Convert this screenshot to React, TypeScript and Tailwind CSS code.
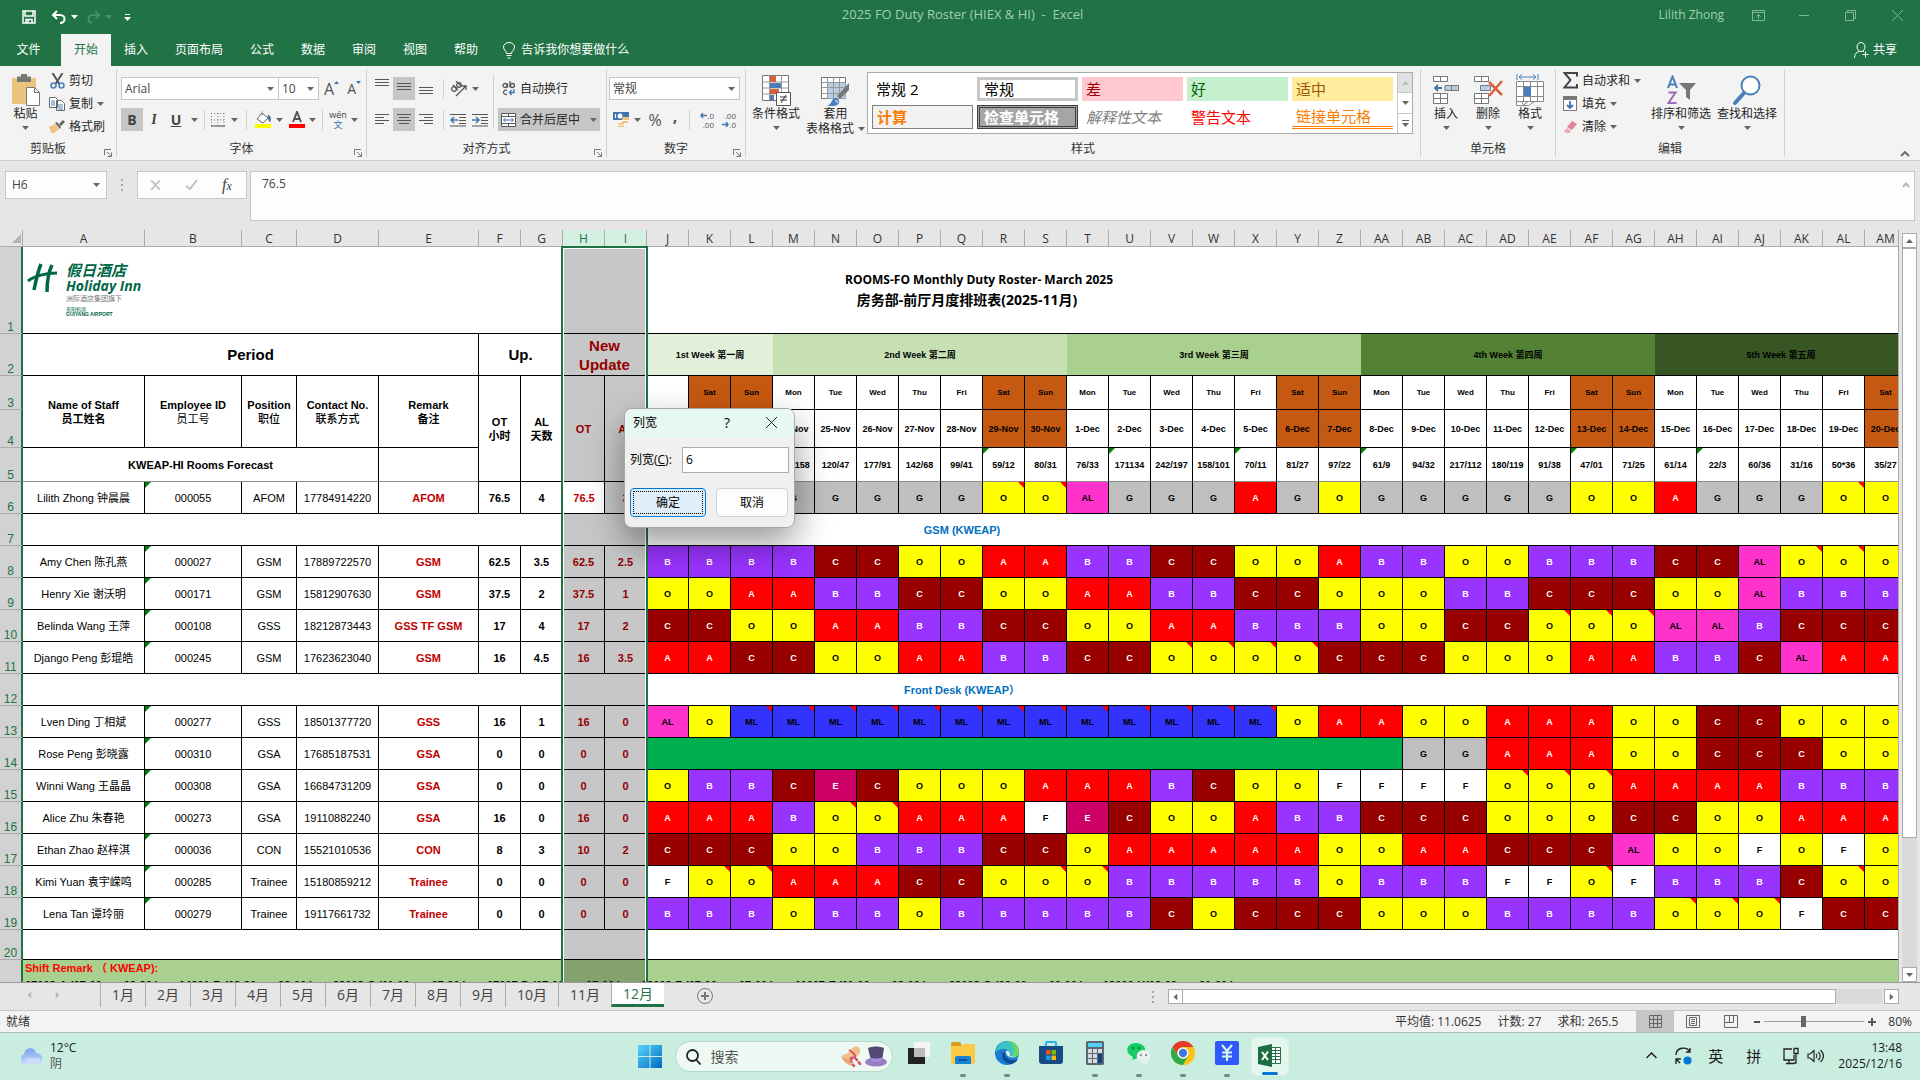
import React, { useState } from 'react';

const columns = [
  'A', 'B', 'C', 'D', 'E', 'F', 'G', 'H', 'I', 'J', 'K', 'L', 'M', 'N', 'O', 'P', 'Q', 'R', 'S', 'T', 'U', 'V', 'W', 'X', 'Y', 'Z',
  'AA', 'AB', 'AC', 'AD', 'AE', 'AF', 'AG', 'AH', 'AI', 'AJ', 'AK', 'AL', 'AM',
];

const days = ['Fri', 'Sat', 'Sun', 'Mon', 'Tue', 'Wed', 'Thu'];
const dates = [
  '21-Nov', '22-Nov', '23-Nov', '24-Nov', '25-Nov', '26-Nov', '27-Nov', '28-Nov', '29-Nov', '30-Nov',
  '1-Dec', '2-Dec', '3-Dec', '4-Dec', '5-Dec', '6-Dec', '7-Dec', '8-Dec', '9-Dec', '10-Dec',
  '11-Dec', '12-Dec', '13-Dec', '14-Dec', '15-Dec', '16-Dec', '17-Dec', '18-Dec', '19-Dec', '20-Dec',
];
const forecast = [
  '', '', '', '103/158', '120/47', '177/91', '142/68', '99/41', '59/12', '80/31',
  '76/33', '171134', '242/197', '158/101', '70/11', '81/27', '97/22', '61/9', '94/32', '217/112',
  '180/119', '91/38', '47/01', '71/25', '61/14', '22/3', '60/36', '31/16', '50*36', '35/27',
];
const forecastFlags = [8, 11, 14, 17, 22, 25];

interface Staff {
  row: number;
  name: string;
  id: string;
  position: string;
  phone: string;
  remark: string;
  ot: string;
  al: string;
  newOt: string;
  newAl: string;
  leave?: number;
  shifts: string;
}

// a trailing * marks a cell that carries a comment
const manager: Staff[] = [
  { row: 6, name: 'Lilith Zhong 钟晨晨', id: '000055', position: 'AFOM', phone: '17784914220', remark: 'AFOM', ot: '76.5', al: '4', newOt: '76.5', newAl: '3', shifts: 'G G G G G G G G O* O* AL G G G A G O G G G G G O O A G G G O* O' },
];
const gsm: Staff[] = [
  { row: 8, name: 'Amy Chen 陈孔燕', id: '000027', position: 'GSM', phone: '17889722570', remark: 'GSM', ot: '62.5', al: '3.5', newOt: '62.5', newAl: '2.5', shifts: 'B B B B C C O O A A B B C C O O A B B O O B B B C C AL O* O* O' },
  { row: 9, name: 'Henry Xie 谢沃明', id: '000171', position: 'GSM', phone: '15812907630', remark: 'GSM', ot: '37.5', al: '2', newOt: '37.5', newAl: '1', shifts: 'O O A A B B C C O O A A B B C C O O O B B C C C O O AL B B B' },
  { row: 10, name: 'Belinda Wang 王萍', id: '000108', position: 'GSS', phone: '18212873443', remark: 'GSS TF GSM', ot: '17', al: '4', newOt: '17', newAl: '2', shifts: 'C C O O A A B B C C O O A A B B B O O C C O* O* O* AL AL B C C C' },
  { row: 11, name: 'Django Peng 彭琨皓', id: '000245', position: 'GSM', phone: '17623623040', remark: 'GSM', ot: '16', al: '4.5', newOt: '16', newAl: '3.5', shifts: 'A A C C O O A A B B C C O* O* O* O* C C C O O O A A B B C AL A A' },
];
const frontDesk: Staff[] = [
  { row: 13, name: 'Lven Ding 丁相斌', id: '000277', position: 'GSS', phone: '18501377720', remark: 'GSS', ot: '16', al: '1', newOt: '16', newAl: '0', shifts: 'AL O ML* ML* ML* ML* ML* ML* ML* ML* ML* ML* ML* ML* ML* O A A O O A A A O O C C O O O' },
  { row: 14, name: 'Rose Peng 彭晓露', id: '000310', position: 'GSA', phone: '17685187531', remark: 'GSA', ot: '0', al: '0', newOt: '0', newAl: '0', leave: 18, shifts: 'G G A A A O O C C C O O' },
  { row: 15, name: 'Winni Wang 王晶晶', id: '000308', position: 'GSA', phone: '16684731209', remark: 'GSA', ot: '0', al: '0', newOt: '0', newAl: '0', shifts: 'O B B C E C O O O A A A B C O O F F F F O* O* O* A A A A B B B' },
  { row: 16, name: 'Alice Zhu 朱春艳', id: '000273', position: 'GSA', phone: '19110882240', remark: 'GSA', ot: '16', al: '0', newOt: '16', newAl: '0', shifts: 'A A A B O* O* A A A F E C O O A B B C C C O O O C C O O A A A' },
  { row: 17, name: 'Ethan Zhao 赵梓淇', id: '000036', position: 'CON', phone: '15521010536', remark: 'CON', ot: '8', al: '3', newOt: '10', newAl: '2', shifts: 'C C C O O B B B C C O A A A A A O O A A C C C AL O O F O F O' },
  { row: 18, name: 'Kimi Yuan 袁宇嵘鸣', id: '000285', position: 'Trainee', phone: '15180859212', remark: 'Trainee', ot: '0', al: '0', newOt: '0', newAl: '0', shifts: 'F O* O* A A A C C O O* O* B B B B B O B B B F F O* F B B B C O* O' },
  { row: 19, name: 'Lena Tan 谭玲丽', id: '000279', position: 'Trainee', phone: '19117661732', remark: 'Trainee', ot: '0', al: '0', newOt: '0', newAl: '0', shifts: 'B B B O B B O B B B B B C O C C C O O O B B B B O* O* O* F C C' },
];

const shiftTimes = [
  '07003-A (07:00——03:30 )',
  '14301-B (03:30——23:00 )',
  '23003-C (11:00——07:30 )',
  '07007-D (07:00——07:00 )',
  '18003-F (07:00——07:00 )',
  '11007-F (11:00——08:00 )',
  '23003-G (09:00——06:00 )',
  '12000-H(12:00——21:00 )',
];

const shiftColors: Record<string, string> = {
  A: 'bg-[#ff0000] text-white',
  B: 'bg-[#9933ff] text-white',
  C: 'bg-[#990000] text-white',
  E: 'bg-[#cc0066] text-white',
  F: 'bg-white text-black',
  G: 'bg-[#bfbfbf] text-black',
  O: 'bg-[#ffff00] text-black',
  AL: 'bg-[#ff33cc] text-black',
  ML: 'bg-[#3333ff] text-black',
};

const cell = 'border-r border-b border-black p-0 text-center';
const blank = 'border-b border-black bg-white p-0';

const Caret = ({ className = 'text-[#666]' }: { className?: string }) => (
  <svg width="7" height="4" viewBox="0 0 7 4" className={`shrink-0 ${className}`}><path d="M0 0h7L3.500 4z" fill="currentColor" /></svg>
);

const Flag = ({ comment = false }: { comment?: boolean }) =>
  comment ? (
    <svg width="6" height="6" className="absolute top-0 right-0"><path d="M0 0h6v6z" fill="#ff0000" /></svg>
  ) : (
    <svg width="6" height="6" className="absolute top-0 left-0"><path d="M0 0h6L0 6z" fill="#008000" /></svg>
  );

const RowNumber = ({ n }: { n?: number }) => (
  <th scope="row" className="border-r-2 border-b border-r-[#217346] border-b-[#ababab] bg-[#d2d2d2] p-0 text-center align-bottom text-xs leading-[11px] font-normal text-[#217346]">{n}</th>
);

/* ---------- ribbon ---------- */

const Group = ({ label, launcher = true, className, children }: { label: string; launcher?: boolean; className: string; children: React.ReactNode }) => (
  <section className={`relative flex flex-col border-r border-[#d0d0d0] ${className}`}>
    <div className="flex h-[72px] items-start">{children}</div>
    <div className="flex h-4 items-center justify-center text-xs text-[#333]">{label}</div>
    {launcher && (
      <button type="button" aria-label={`${label}设置`} className="absolute right-1 bottom-0">
        <svg width="8" height="8" viewBox="0 0 8 8" fill="none" stroke="#777"><path d="M.5 6V.5H7M3 3l4 4M7.500 3.500v4h-4" /></svg>
      </button>
    )}
  </section>
);

const Lines = ({ widths }: { widths: number[] }) => (
  <svg width="14" height="14" viewBox="0 0 14 14" stroke="#555" className="shrink-0">
    {widths.map((w, i) => {
      const start = w < 0 ? 14 + w : w === 10 ? 2 : 0;
      return <path key={i} d={`M${start} ${i * 3 + 1.5}h${Math.abs(w)}`} />;
    })}
  </svg>
);

const iconButton = 'flex h-[23px] items-center justify-center shrink-0';

const DropDown = ({ label, value, className }: { label: string; value: string; className: string }) => (
  <div className={`relative flex h-[23px] shrink-0 items-center border border-[#c6c6c6] bg-white ${className}`}>
    <select aria-label={label} className="size-full appearance-none bg-transparent pl-[3px] text-xs text-[#444] outline-none"><option>{value}</option></select>
    <Caret className="pointer-events-none absolute right-1 text-[#666]" />
  </div>
);

const BigButton = ({ icon, label, className }: { icon: React.ReactNode; label: string; className: string }) => (
  <button type="button" className={`flex h-full flex-col items-center pt-[5px] text-xs leading-4 whitespace-nowrap text-[#262626] ${className}`}>
    <span className="flex h-8 items-center">{icon}</span>
    <span>{label}</span>
    <Caret className="mt-1 text-[#666]" />
  </button>
);

const SmallButton = ({ icon, label, caret = false }: { icon: React.ReactNode; label: string; caret?: boolean }) => (
  <button type="button" className="flex h-[23px] items-center gap-1 text-xs whitespace-nowrap text-[#262626]">
    <span className="flex w-4 justify-center">{icon}</span>
    <span>{label}</span>
    {caret && <Caret />}
  </button>
);

const PasteIcon = () => (
  <svg width="28" height="32" viewBox="0 0 28 32">
    <path d="M0 4h24v26H0z" fill="#edc47d" />
    <path d="M5 2.500h4V0h6v2.500h4V8H5z" fill="#777" />
    <path d="M14.500 13.500h8l5 5v13h-13z" fill="#fff" stroke="#777" />
    <path d="M22.500 13.500v5h5" fill="none" stroke="#777" />
  </svg>
);
const CutIcon = () => (
  <svg width="15" height="16" viewBox="0 0 15 16" fill="none">
    <path d="M2.500 0l7 11M12.500 0l-7 11" stroke="#555" strokeWidth="2" />
    <circle cx="3.500" cy="12.500" r="2.500" stroke="#4a7ebb" strokeWidth="1.500" />
    <circle cx="11.500" cy="12.500" r="2.500" stroke="#4a7ebb" strokeWidth="1.500" />
  </svg>
);
const CopyIcon = () => (
  <svg width="16" height="14" viewBox="0 0 16 14" fill="#fff" stroke="#666">
    <path d="M.5.5h6l2 2v8h-8zM7.500 3.500h5l3 3v7h-8z" />
    <path d="M2 4h4M2 6h4M2 8h4M9 8h5M9 10h5M9 12h5" stroke="#4a7ebb" />
  </svg>
);
const BrushIcon = () => (
  <svg width="16" height="14" viewBox="0 0 16 14">
    <path d="M0 7l6-3 4 5-6 5-2-2z" fill="#edc47d" />
    <path d="M6 3l2-1 4 5-1 2zM10 4l4-4 2 2-4 4z" fill="#666" />
  </svg>
);
const ConditionalIcon = () => (
  <svg width="29" height="31" viewBox="0 0 29 31">
    <path d="M.5.5h26v25H.5z" fill="#fff" stroke="#777" />
    <path d="M.5 7h26M.5 13h26M.5 19h26M7.500 0v25M19.500 0v25" stroke="#999" />
    <path d="M8 1h6v6H8zM8 14h9v5H8z" fill="#d9603b" />
    <path d="M8 8h11v5H8zM8 20h4v5H8z" fill="#4a7ebb" />
    <path d="M14.500 17.500h14v13h-14z" fill="#fff" stroke="#555" />
    <path d="M18 22h7M18 25h7M24 20l-5 8" stroke="#333" />
  </svg>
);
const TableFormatIcon = () => (
  <svg width="29" height="31" viewBox="0 0 29 31">
    <path d="M.5 2.500h24v21H.5z" fill="#fff" stroke="#777" />
    <path d="M6.500 8h18v15.500h-18z" fill="#b8cce4" />
    <path d="M.5 7.500h24M.5 12.500h24M.5 18.500h24M6.500 2.500v21M12.500 2.500v21M18.500 2.500v21" stroke="#999" />
    <path d="M28 8v7l-9 9-3-3z" fill="#777" />
    <path d="M6 31c5-1 4-8 9-8 5 1 4 8-3 8z" fill="#4a7ebb" />
    <path d="M14 26c2-1 3 0 2 2" stroke="#fff" fill="none" />
  </svg>
);
const InsertIcon = () => (
  <svg width="26" height="30" viewBox="0 0 26 30" fill="#fff" stroke="#777">
    <path d="M.5 1.500h14v5H.5zM7.500 1.500v5M.5 18.500h14v10H.5zM7.500 18.500v10M.5 23.500h14" />
    <path d="M12 10.500h13.500v5H12zM18.500 10.500v5" fill="#b8cce4" />
    <path d="M9 13H2M5 10l-3 3 3 3" stroke="#3e74b0" strokeWidth="1.800" fill="none" />
  </svg>
);
const DeleteIcon = () => (
  <svg width="29" height="30" viewBox="0 0 29 30" fill="#fff" stroke="#777">
    <path d="M.5 1.500h14v5H.5zM7.500 1.500v5M.5 18.500h14v10H.5zM7.500 18.500v10M.5 23.500h14" />
    <path d="M6.500 10.500h10v5h-10z" fill="#b8cce4" />
    <path d="M15 7l13 13M28 6L15 21" stroke="#d9603b" strokeWidth="2.500" />
  </svg>
);
const FormatIcon = () => (
  <svg width="28" height="32" viewBox="0 0 28 32" fill="#fff" stroke="#888">
    <path d="M.5 7.500h27v20H.5zM7.500 7.500v20M14.500 7.500v20M21.500 7.500v20M.5 12.500h27M.5 22.500h27" />
    <path d="M8 13h7v9H8z" fill="#4a7ebb" stroke="none" />
    <path d="M1 0v6M22 0v6M3 3h17M6 .5L3 3l3 2.500M17 .5L20 3l-3 2.500" stroke="#4a7ebb" fill="none" />
    <path d="M.5 31.500v-4h5l2 3.500 5-3.500h6l-6 4z" />
  </svg>
);
const SortIcon = () => (
  <svg width="29" height="30" viewBox="0 0 29 30" fill="none">
    <path d="M1 13L5.500 1.500 10 13M2.500 9.500h6" stroke="#4a7ebb" strokeWidth="2" />
    <path d="M1.500 17.500h7L1.500 28h8" stroke="#9a6bb8" strokeWidth="2" />
    <path d="M12 8h17l-6 7v10l-4-3v-7z" fill="#777" />
  </svg>
);
const FindIcon = () => (
  <svg width="28" height="30" viewBox="0 0 28 30">
    <circle cx="17.500" cy="10.500" r="9" fill="#fff" stroke="#4a7ebb" strokeWidth="2" />
    <path d="M11 18L2 28" stroke="#4a7ebb" strokeWidth="4" strokeLinecap="round" />
  </svg>
);

const Separator = ({ className }: { className: string }) => <span className={`w-px shrink-0 bg-[#d0d0d0] ${className}`} />;

function TitleBar() {
  return (
    <header className="flex h-[34px] items-center bg-[#217346] pb-1 text-xs text-[#9fcfb4]">
      <div className="flex flex-1 items-center pt-1 pl-[22px]">
        <button type="button" aria-label="保存">
          <svg width="14" height="14" viewBox="0 0 14 14" fill="none" stroke="#fff" strokeWidth="1.500"><path d="M1 1h12v12H1zM3 1v5h8V1M4 13V9.500h6V13M6 10v3" /></svg>
        </button>
        <button type="button" aria-label="撤消" className="ml-[15px]">
          <svg width="16" height="14" viewBox="0 0 16 14" fill="none" stroke="#fff" strokeWidth="2"><path d="M6 1L2 5l4 4M2 5h7c6 0 6 8 0 8" /></svg>
        </button>
        <Caret className="ml-1 text-white" />
        <button type="button" aria-label="恢复" className="ml-2">
          <svg width="15" height="14" viewBox="0 0 16 14" fill="none" stroke="#4d9068" strokeWidth="2"><path d="M10 1l4 4-4 4M14 5H7c-6 0-6 8 0 8" /></svg>
        </button>
        <Caret className="ml-1 text-[#4d9068]" />
        <button type="button" aria-label="自定义快速访问工具栏" className="ml-3 flex flex-col items-center gap-0.5">
          <span className="h-px w-[5px] bg-white" />
          <Caret className="text-white" />
        </button>
      </div>
      <h1 className="text-[13px] whitespace-pre">2025 FO Duty Roster (HIEX & HI)  -  Excel</h1>
      <div className="flex flex-1 items-center justify-end pr-[17px]">
        <span className="pr-7">Lilith Zhong</span>
        <button type="button" aria-label="功能区显示选项" className="mr-[34px]">
          <svg width="13" height="11" viewBox="0 0 13 11" fill="none" stroke="#7eb796"><path d="M.5.5h12v10H.5zM.5 2.500h12M6.500 9V4.500M4.500 6.500l2-2 2 2" /></svg>
        </button>
        <button type="button" aria-label="最小化" className="mr-9">
          <svg width="10" height="10" stroke="#7eb796"><path d="M0 5.500h10" /></svg>
        </button>
        <button type="button" aria-label="向下还原" className="mr-9">
          <svg width="11" height="11" viewBox="0 0 11 11" fill="none" stroke="#7eb796"><path d="M.5 2.500h8v8h-8zM2.500 2.500v-2h8v8h-2" /></svg>
        </button>
        <button type="button" aria-label="关闭">
          <svg width="11" height="11" viewBox="0 0 11 11" stroke="#7eb796"><path d="M0 0l11 11M11 0L0 11" /></svg>
        </button>
      </div>
    </header>
  );
}

function TabBar() {
  const tabs = ['插入', '页面布局', '公式', '数据', '审阅', '视图', '帮助'];
  return (
    <nav className="flex h-8 items-stretch bg-[#217346] text-xs text-white">
      <button type="button" className="w-[61px] pr-1">文件</button>
      <button type="button" className="bg-[#f3f3f3] px-[13px] text-[#217346]">开始</button>
      <div className="flex gap-px">
        {tabs.map((t) => (
          <button key={t} type="button" className="px-[13px]">{t}</button>
        ))}
      </div>
      <button type="button" className="flex items-center gap-1.5 px-3">
        <svg width="12" height="17" viewBox="0 0 12 17" fill="none" stroke="#fff"><path d="M3.500 11.500C3.500 9 .5 8 .5 5a5.500 4.500 0 0111 0c0 3-3 4-3 6.500zM3.500 13.500h5M4.500 16h3" /></svg>
        告诉我你想要做什么
      </button>
      <button type="button" className="mr-[23px] ml-auto flex items-center gap-1">
        <svg width="15" height="17" viewBox="0 0 15 17" fill="none" stroke="#fff"><ellipse cx="7" cy="5" rx="4" ry="4.500" /><path d="M.5 16c0-4 2-6 5-6.500M9 9.500h1M11.500 9.500v6M8.500 12.500h6" /></svg>
        共享
      </button>
    </nav>
  );
}

function Ribbon() {
  const styles = [
    { label: '常规 2', cls: 'text-black' },
    { label: '常规', cls: 'border-3 border-[#c6c6c6] text-black' },
    { label: '差', cls: 'bg-[#ffc7ce] text-[#9c0006]' },
    { label: '好', cls: 'bg-[#c6efce] text-[#006100]' },
    { label: '适中', cls: 'bg-[#ffeb9c] text-[#9c5700]' },
    { label: '计算', cls: 'border border-[#7f7f7f] bg-[#f2f2f2] font-bold text-[#fa7d00]' },
    { label: '检查单元格', cls: 'border-3 border-double border-[#3f3f3f] bg-[#a5a5a5] font-bold text-white' },
    { label: '解释性文本', cls: 'text-[#7f7f7f] italic' },
    { label: '警告文本', cls: 'text-[#ff0000]' },
    { label: '链接单元格', cls: 'border-b-3 border-double border-[#ff8001] text-[#fa7d00]' },
  ];
  return (
    <div className="relative flex h-[95px] border-b border-[#d0d0d0] bg-[#f3f3f3] pt-[3px] pb-[3px]">
      <Group label="剪贴板" className="w-[117px] pr-9 [&>div:last-of-type]:pl-4">
        <BigButton icon={<PasteIcon />} label="粘贴" className="w-[45px] shrink-0 pl-1.5" />
        <div className="pl-1">
          <SmallButton icon={<CutIcon />} label="剪切" />
          <SmallButton icon={<CopyIcon />} label="复制" caret />
          <SmallButton icon={<BrushIcon />} label="格式刷" />
        </div>
      </Group>

      <Group label="字体" className="w-[250px]">
        <div className="flex flex-col gap-2 pt-2 pl-1">
          <div className="flex h-[23px]">
            <DropDown label="字体" value="Arial" className="w-[158px]" />
            <DropDown label="字号" value="10" className="w-10 border-l-0" />
            <button type="button" aria-label="增大字号" className="flex w-5 items-center justify-end text-base text-[#555]">A<svg width="5" height="3" className="mb-3"><path d="M0 3h5L2.500 0z" fill="#3e74b0" /></svg></button>
            <button type="button" aria-label="减小字号" className="flex w-[22px] items-center justify-end text-sm text-[#555]">A<svg width="5" height="3" className="mb-3"><path d="M0 0h5L2.500 3z" fill="#3e74b0" /></svg></button>
          </div>
          <div className="flex h-[23px] items-center text-sm text-[#444]">
            <button type="button" aria-label="加粗" className={`${iconButton} w-[22px] bg-[#c6c6c6] font-bold`}>B</button>
            <button type="button" aria-label="倾斜" className={`${iconButton} w-[22px] font-serif font-bold italic`}>I</button>
            <button type="button" aria-label="下划线" className={`${iconButton} w-[22px] font-bold underline`}>U</button>
            <Caret className="ml-1 text-[#666]" />
            <Separator className="mx-1.5 h-5" />
            <svg width="14" height="14" viewBox="0 0 14 14" className="shrink-0" stroke="#777" fill="none"><path d="M.5 0v13M7 0v13M13 0v13M0 .5h14M0 7h14" strokeDasharray="1 2" /><path d="M0 13h14" stroke="#444" /></svg>
            <Caret className="ml-1.5 text-[#666]" />
            <Separator className="mx-2 h-5" />
            <svg width="17" height="17" viewBox="0 0 17 17" className="shrink-0"><path d="M7 2l6 5-5 5-6-4z" fill="#fff" stroke="#666" /><path d="M7 5V0M13 4c3 1 3 4 2 7l-2-3z" fill="#3e74b0" stroke="#666" strokeWidth=".5" /><path d="M0 13h16v4H0z" fill="#ffff00" /></svg>
            <Caret className="ml-1 text-[#666]" />
            <svg width="16" height="17" viewBox="0 0 16 17" className="ml-1.5 shrink-0"><path d="M4 11L8 1l4 10M5.500 8h5" stroke="#555" strokeWidth="2" fill="none" /><path d="M0 13h16v4H0z" fill="#ff0000" /></svg>
            <Caret className="ml-1 text-[#666]" />
            <Separator className="mx-1.5 h-5" />
            <button type="button" aria-label="显示拼音" className="flex w-[18px] flex-col items-center text-[9px] leading-[10px]"><span>wén</span><span className="text-[#3e74b0]">文</span></button>
            <Caret className="ml-1 text-[#666]" />
          </div>
        </div>
      </Group>

      <Group label="对齐方式" className="w-[240px]">
        <div className="flex flex-col gap-2 pt-2 pl-1">
          <div className="flex h-[23px] items-center">
            <button type="button" aria-label="顶端对齐" className={`${iconButton} w-[22px] pb-2`}><Lines widths={[14, 14, 14]} /></button>
            <button type="button" aria-label="垂直居中" className={`${iconButton} w-[22px] bg-[#c6c6c6]`}><Lines widths={[14, 14, 14]} /></button>
            <button type="button" aria-label="底端对齐" className={`${iconButton} w-[22px] pt-2`}><Lines widths={[14, 14, 14]} /></button>
            <Separator className="mx-1.5 h-5" />
            <svg width="18" height="16" viewBox="0 0 18 16" className="shrink-0" fill="none" stroke="#555" strokeWidth="1.300"><circle cx="4" cy="8" r="2.300" /><path d="M3 4l5 5" /><circle cx="9" cy="4" r="2.300" /><path d="M6 0l5 5M6 15L16 5M12 5h4v4" /></svg>
            <Caret className="mx-1 text-[#666]" />
          </div>
          <div className="flex h-[23px] items-center">
            <button type="button" aria-label="左对齐" className={`${iconButton} w-[22px]`}><Lines widths={[14, 9, 14, 9]} /></button>
            <button type="button" aria-label="居中" className={`${iconButton} w-[22px] bg-[#c6c6c6]`}><Lines widths={[14, 10, 14, 10]} /></button>
            <button type="button" aria-label="右对齐" className={`${iconButton} w-[22px]`}><Lines widths={[14, -9, 14, -9]} /></button>
            <Separator className="mx-1.5 h-5" />
            <svg width="17" height="14" viewBox="0 0 17 14" className="shrink-0" stroke="#555" fill="none"><path d="M0 1.500h16M9 4.500h7M9 7.500h7M9 10.500h7M0 13h16" /><path d="M1 7h7M4 4L1 7l3 3" stroke="#3e74b0" strokeWidth="1.500" /></svg>
            <svg width="17" height="14" viewBox="0 0 17 14" className="ml-[5px] shrink-0" stroke="#555" fill="none"><path d="M0 1.500h16M9 4.500h7M9 7.500h7M9 10.500h7M0 13h16" /><path d="M0 7h7M4 4l3 3-3 3" stroke="#3e74b0" strokeWidth="1.500" /></svg>
          </div>
        </div>
        <Separator className="mx-1 mt-1.5 h-[54px]" />
        <div className="flex flex-col gap-2 pt-2">
          <button type="button" className="flex h-[23px] items-center gap-1 pl-1 text-xs text-[#262626]">
            <svg width="14" height="15" viewBox="0 0 14 15" fill="none" stroke="#555" strokeWidth="1.300"><circle cx="3" cy="4.500" r="2" /><path d="M5.500 2.500v4M8 0v6.500" /><circle cx="10.500" cy="4.500" r="2" /><path d="M5 9.500c-3-2-6 4 0 4" /><path d="M12 8v3.500H7.500M9.500 9l-2 2.500 2 2.500" stroke="#3e74b0" /></svg>
            自动换行
          </button>
          <button type="button" className="flex h-[23px] w-[102px] items-center gap-1 bg-[#c6c6c6] pl-[3px] text-xs whitespace-nowrap text-[#262626]">
            <svg width="15" height="14" viewBox="0 0 15 14" fill="#fff" stroke="#555" className="shrink-0"><path d="M.5.5h14v13H.5zM.5 3.500h14M.5 10.500h14M7.500 0v3.500M7.500 10.500V14" /><path d="M2.500 7h10M4.500 5l-2 2 2 2M10.500 5l2 2-2 2" stroke="#3e74b0" fill="none" /></svg>
            合并后居中
            <Caret className="ml-1.5 text-[#666]" />
          </button>
        </div>
      </Group>

      <Group label="数字" className="w-[139px]">
        <div className="flex flex-col gap-2 pt-2 pl-0.5">
          <DropDown label="数字格式" value="常规" className="w-[131px]" />
          <div className="flex h-[23px] items-center pl-1 text-base text-[#555]">
            <svg width="17" height="17" viewBox="0 0 17 17" className="shrink-0"><path d="M0 1h16v8H0z" fill="#3e74b0" /><circle cx="7" cy="5" r="2.500" fill="#fff" /><path d="M2 3h1v4H2z" fill="#fff" /><path d="M10 6h6v3h-1v3H9V7zM5 12h6v4H5z" fill="#edc47d" /><path d="M9 9.500h6M5 14h6" stroke="#fff" /></svg>
            <Caret className="ml-1 text-[#666]" />
            <button type="button" aria-label="百分比样式" className="ml-1.5 w-4">%</button>
            <button type="button" aria-label="千位分隔样式" className="ml-1.5 w-3 pb-2 font-bold">,</button>
            <Separator className="mx-2 h-5" />
            <button type="button" aria-label="增加小数位数" className="flex w-4 flex-col items-end text-[8px] leading-[9px] whitespace-nowrap">
              <span className="flex items-center"><svg width="7" height="5" fill="none" stroke="#3e74b0" strokeWidth="1.500"><path d="M7 2.500H1M3 0L1 2.500 3 5" /></svg>.0</span>
              <span>.00</span>
            </button>
            <button type="button" aria-label="减少小数位数" className="ml-1.5 flex w-4 flex-col items-end text-[8px] leading-[9px] whitespace-nowrap">
              <span>.00</span>
              <span className="flex items-center"><svg width="7" height="5" fill="none" stroke="#3e74b0" strokeWidth="1.500"><path d="M0 2.500h6M4 0l2 2.500L4 5" /></svg>.0</span>
            </button>
          </div>
        </div>
      </Group>

      <Group label="样式" launcher={false} className="min-w-0 flex-1">
        <BigButton icon={<ConditionalIcon />} label="条件格式" className="ml-0.5 w-[56px] shrink-0" />
        <button type="button" className="flex h-full w-[63px] shrink-0 flex-col items-center pt-[5px] text-xs leading-[15px] whitespace-nowrap text-[#262626]">
          <span className="flex h-8 items-center"><TableFormatIcon /></span>
          <span>套用</span>
          <span className="flex items-center gap-1">表格格式<Caret /></span>
        </button>
        <div className="mt-[3px] mr-[7px] flex h-[62px] min-w-0 flex-1 border border-[#ababab] bg-white">
          <div className="grid flex-1 grid-cols-5 gap-1 p-1 text-[15px] leading-5">
            {styles.map((s) => (
              <button key={s.label} type="button" className={`flex h-6 items-center overflow-hidden px-1 whitespace-nowrap ${s.cls}`}>{s.label}</button>
            ))}
          </div>
          <div className="flex w-[15px] flex-col border-l border-[#c6c6c6]">
            <button type="button" aria-label="上一行" className="flex flex-1 items-center justify-center bg-[#e1e1e1]"><Caret className="rotate-180 text-[#bbb]" /></button>
            <button type="button" aria-label="下一行" className="flex flex-1 items-center justify-center border-t border-[#c6c6c6]"><Caret /></button>
            <button type="button" aria-label="其他" className="flex flex-1 flex-col items-center justify-center gap-0.5 border-t border-[#c6c6c6]"><span className="h-px w-[7px] bg-[#666]" /><Caret /></button>
          </div>
        </div>
      </Group>

      <Group label="单元格" launcher={false} className="w-[135px]">
        <BigButton icon={<InsertIcon />} label="插入" className="ml-1 w-[42px]" />
        <BigButton icon={<DeleteIcon />} label="删除" className="w-[42px]" />
        <BigButton icon={<FormatIcon />} label="格式" className="w-[42px]" />
      </Group>

      <Group label="编辑" launcher={false} className="w-[229px]">
        <div className="w-[92px] pl-1.5">
          <SmallButton icon={<svg width="15" height="17" viewBox="0 0 15 17"><path d="M14 4.500V1H1.500l6 7-6 7.500H14V12" fill="none" stroke="#444" strokeWidth="2" /></svg>} label="自动求和" caret />
          <SmallButton icon={<svg width="14" height="15" viewBox="0 0 14 15" fill="#fff" stroke="#777"><path d="M.5.5h13v14H.5z" /><path d="M0 0h14v4H0z" fill="#777" stroke="none" /><path d="M7 5v7M4 9l3 3 3-3" stroke="#3e74b0" strokeWidth="1.800" fill="none" /></svg>} label="填充" caret />
          <SmallButton icon={<svg width="13" height="12" viewBox="0 0 13 12"><path d="M8 0l5 3-5 6-5-3z" fill="#e8829a" /><path d="M3 7l4 3-1 2H2L0 10z" fill="#eda9b8" /></svg>} label="清除" caret />
        </div>
        <BigButton icon={<SortIcon />} label="排序和筛选" className="w-[66px]" />
        <BigButton icon={<FindIcon />} label="查找和选择" className="w-[66px]" />
      </Group>

      <div className="flex w-[135px] items-end justify-end pr-2.5">
        <button type="button" aria-label="折叠功能区"><svg width="10" height="7" viewBox="0 0 10 7" fill="none" stroke="#666" strokeWidth="1.800"><path d="M1 6l4-4 4 4" /></svg></button>
      </div>
    </div>
  );
}

function FormulaBar() {
  return (
    <div className="flex h-[69px] items-start pt-2.5 pr-[5px] pl-[5px] text-xs text-[#444]">
      <div className="flex h-7 w-[102px] items-center border border-[#c6c6c6] bg-[#fdfdfd] pr-1.5 pl-1.5">
        <input aria-label="名称框" defaultValue="H6" className="w-full min-w-0 bg-transparent outline-none" />
        <Caret />
      </div>
      <div className="flex h-7 w-[30px] flex-col items-center justify-center gap-[3px]">
        {[0, 1, 2].map((i) => <span key={i} className="size-0.5 bg-[#a6a6a6]" />)}
      </div>
      <div className="flex h-7 w-[110px] items-center gap-6 border border-[#c6c6c6] bg-[#fdfdfd] pl-3">
        <button type="button" aria-label="取消输入"><svg width="11" height="10" viewBox="0 0 11 10" stroke="#c0c0c0" strokeWidth="1.800"><path d="M1 0l9 10M10 0L1 10" /></svg></button>
        <button type="button" aria-label="输入"><svg width="13" height="10" viewBox="0 0 13 10" fill="none" stroke="#c0c0c0" strokeWidth="2"><path d="M1 6l4 3 7-9" /></svg></button>
        <button type="button" aria-label="插入函数" className="font-['Liberation_Serif',serif] text-base leading-4 italic">f<span className="text-xs">x</span></button>
      </div>
      <div className="ml-[3px] flex h-[50px] flex-1 items-start border border-[#c6c6c6] bg-[#fdfdfd] pt-1 pr-1 pl-[11px]">
        <input aria-label="编辑栏" defaultValue="76.5" className="flex-1 bg-transparent outline-none" />
        <svg width="8" height="6" viewBox="0 0 8 6" className="mt-1.5" fill="none" stroke="#b0b0b0" strokeWidth="1.800"><path d="M1 5l3-3.500L7 5" /></svg>
      </div>
    </div>
  );
}

/* ---------- sheet ---------- */

function StaffRow({ staff }: { staff: Staff }) {
  const info = `${cell} bg-white`;
  return (
    <tr className="h-8">
      <RowNumber n={staff.row} />
      <td className={`${info} whitespace-nowrap`}>{staff.name}</td>
      <td className={`${info} relative`}><Flag />{staff.id}</td>
      <td className={info}>{staff.position}</td>
      <td className={info}>{staff.phone}</td>
      <td className={`${info} font-bold text-[#c00000]`}>{staff.remark}</td>
      <td className={`${info} font-bold`}>{staff.ot}</td>
      <td className={`${info} font-bold`}>{staff.al}</td>
      <td className={`${info} font-bold text-[#c00000] ${staff.row === 6 ? 'relative' : ''}`}>
        {staff.row === 6 ? <div className="absolute inset-0 left-px z-10 flex items-center justify-center bg-white">{staff.newOt}</div> : staff.newOt}
      </td>
      <td className={`${info} font-bold text-[#c00000]`}>{staff.newAl}</td>
      {staff.leave && <td colSpan={staff.leave} className={`${cell} bg-[#00b050]`} />}
      {staff.shifts.split(' ').map((s, i) => {
        const code = s.replace('*', '');
        return (
          <td key={i} className={`${cell} relative text-[9px] font-bold ${shiftColors[code]}`}>
            {s.endsWith('*') && <Flag comment />}
            {code}
          </td>
        );
      })}
    </tr>
  );
}

const SectionRow = ({ n, title }: { n: number; title: string }) => (
  <tr className="h-8">
    <RowNumber n={n} />
    <td colSpan={9} className={blank} />
    <td colSpan={15} className={`${blank} text-center font-bold text-[#0070c0]`}>{title}</td>
    <td colSpan={15} className={blank} />
  </tr>
);

function Sheet() {
  const weekend = (i: number) => i % 7 === 1 || i % 7 === 2;
  const head = `${cell} bg-white font-bold leading-[14px]`;
  return (
    <div className="relative min-w-0 flex-1 overflow-hidden border-r border-[#ababab]">
      <table className="w-[1907px] table-fixed border-separate border-spacing-0 font-['Liberation_Sans','Noto_Sans_CJK_SC',sans-serif] text-[11px] leading-[14px] text-black">
        <colgroup>
          <col className="w-[23px]" />
          <col className="w-[122px]" />
          <col className="w-[97px]" />
          <col className="w-[55px]" />
          <col className="w-[82px]" />
          <col className="w-[100px]" />
          {columns.slice(5).map((c) => <col key={c} className="w-[42px]" />)}
        </colgroup>
        <thead>
          <tr className="h-[17px] font-['Open_Sans',sans-serif] text-xs leading-[14px] text-[#333]">
            <th className="border-r border-b border-[#ababab] p-0"><svg width="9" height="9" className="ml-3"><path d="M9 0v9H0z" fill="#b4b4b4" /></svg></th>
            {columns.map((c) => (
              <th key={c} scope="col" className={`border-r border-b border-[#ababab] p-0 pt-0.5 font-normal ${c === 'H' || c === 'I' ? 'bg-[#d3f0e0] text-[#217346]' : 'bg-[#e6e6e6]'}`}>{c}</th>
            ))}
          </tr>
        </thead>
        <tbody>
          <tr className="h-[87px]">
            <RowNumber n={1} />
            <td colSpan={9} className={`${blank} align-top`}>
              <div className="flex gap-2 pt-4 pl-1 text-[#006747]">
                <svg width="31" height="30" viewBox="0 0 31 30" fill="none" stroke="#006747" strokeWidth="3.500"><path d="M14 1C11 8 9 17 7 27M25 2c-4 8-5 16-5 27" /><path d="M1 18c6-5 18-8 29-8" strokeWidth="3" /></svg>
                <div>
                  <div className="text-[15px] leading-4 font-bold italic">假日酒店</div>
                  <div className="font-['Open_Sans',sans-serif] text-sm leading-[14px] font-bold italic">Holiday Inn</div>
                  <div className="mt-0.5 text-[7px] leading-2 text-[#777]">洲际酒店集团旗下</div>
                  <div className="mt-1 text-[5px] leading-[5px]">贵阳机场</div>
                  <div className="text-[5px] leading-[5px] font-bold">GUIYANG AIRPORT</div>
                </div>
              </div>
            </td>
            <td colSpan={16} className={`${blank} pr-2 text-center font-['Open_Sans','Noto_Sans_CJK_SC',sans-serif] text-xs leading-5 font-bold`}>
              ROOMS-FO Monthly Duty Roster- March 2025
              <br />
              <span className="pr-6 text-sm leading-5">房务部-前厅月度排班表(2025-11月)</span>
            </td>
            <td colSpan={14} className={blank} />
          </tr>
          <tr className="h-[42px] text-[9px]">
            <RowNumber n={2} />
            <td colSpan={5} className={`${head} text-[15px]`}>Period</td>
            <td colSpan={2} className={`${head} text-[15px]`}>Up.</td>
            <td colSpan={2} className={`${cell} bg-white text-[15px] leading-[19px] font-bold text-[#c00000]`}>New<br />Update</td>
            <td colSpan={3} className="border-b border-black bg-[#e2efda] p-0 text-center font-bold">1st Week 第一周</td>
            <td colSpan={7} className="border-b border-black bg-[#c6e0b4] p-0 text-center font-bold">2nd Week 第二周</td>
            <td colSpan={7} className="border-b border-black bg-[#a9d08e] p-0 text-center font-bold">3rd Week 第三周</td>
            <td colSpan={7} className="border-b border-black bg-[#548235] p-0 text-center font-bold">4th Week 第四周</td>
            <td colSpan={6} className="border-b border-black bg-[#375623] p-0 text-center font-bold">5th Week 第五周</td>
          </tr>
          <tr className="h-[34px]">
            <RowNumber n={3} />
            <td rowSpan={2} className={head}>Name of Staff<br />员工姓名</td>
            <td rowSpan={2} className={head}>Employee ID<br /><span className="font-normal">员工号</span></td>
            <td rowSpan={2} className={head}>Position<br /><span className="font-medium">职位</span></td>
            <td rowSpan={2} className={head}>Contact No.<br /><span className="font-medium">联系方式</span></td>
            <td rowSpan={2} className={head}>Remark<br />备注</td>
            <td rowSpan={3} className={head}>OT<br />小时</td>
            <td rowSpan={3} className={head}>AL<br />天数</td>
            <td rowSpan={3} className={`${head} text-[#c00000]`}>OT</td>
            <td rowSpan={3} className={`${head} text-[#c00000]`}>AL</td>
            {dates.map((d, i) => (
              <td key={d} className={`${cell} text-[8px] font-bold ${weekend(i) ? 'bg-[#c65911]' : 'bg-white'}`}>{i > 0 && days[i % 7]}</td>
            ))}
          </tr>
          <tr className="h-[38px] text-[9px] font-bold">
            <RowNumber n={4} />
            {dates.map((d, i) => (
              <td key={d} className={`${cell} whitespace-nowrap ${weekend(i) ? 'bg-[#c65911]' : 'bg-white'}`}>{d}</td>
            ))}
          </tr>
          <tr className="h-[34px] font-bold [&>*]:border-b-[#8c8c8c]">
            <RowNumber n={5} />
            <td colSpan={4} className={head}>KWEAP-HI Rooms Forecast</td>
            <td className={head} />
            {forecast.map((f, i) => (
              <td key={i} className={`${cell} relative bg-white text-[9px]`}>{forecastFlags.includes(i) && <Flag />}{f}</td>
            ))}
          </tr>
          {manager.map((s) => <StaffRow key={s.id} staff={s} />)}
          <SectionRow n={7} title="GSM (KWEAP)" />
          {gsm.map((s) => <StaffRow key={s.id} staff={s} />)}
          <SectionRow n={12} title="Front Desk (KWEAP）" />
          {frontDesk.map((s) => <StaffRow key={s.id} staff={s} />)}
          <tr className="h-[30px]">
            <RowNumber n={20} />
            <td colSpan={39} className={blank} />
          </tr>
          <tr className="h-20">
            <RowNumber />
            <td colSpan={39} className="bg-[#a9d08e] p-0 pl-0.5 align-top font-bold whitespace-pre">
              <div className="leading-4 text-[#ff0000]">Shift Remark （ KWEAP):</div>
              <div className="mt-0.5 flex">
                {shiftTimes.map((t) => <span key={t} className="w-[154px]">{t}</span>)}
              </div>
            </td>
          </tr>
        </tbody>
      </table>
      <div className="pointer-events-none absolute top-4 -bottom-1 left-[561px] w-[87px] border-2 border-[#217346]">
        <div className="size-full border border-white bg-black/22 bg-clip-padding" />
      </div>
    </div>
  );
}

const scrollButton = 'flex shrink-0 items-center justify-center border border-[#ababab] bg-white';

function SheetTabs() {
  const [active, setActive] = useState('12月');
  const months = Array.from({ length: 12 }, (_, i) => `${i + 1}月`);
  return (
    <div className="flex h-7 shrink-0 items-start border-t border-[#9a9a9a] bg-[#e6e6e6] text-sm text-[#444]">
      <div className="flex h-6 w-[100px] items-center gap-[21px] pl-[26px]">
        <Caret className="rotate-90 text-[#b8b8b8]" />
        <Caret className="-rotate-90 text-[#b8b8b8]" />
      </div>
      {months.map((m, i) => (
        <button
          key={m}
          type="button"
          onClick={() => setActive(m)}
          className={`h-6 border-l border-[#ababab] ${i > 8 ? 'w-[53px]' : 'w-[45px]'} ${active === m ? 'border-b-3 border-b-[#217346] bg-white text-[#217346]' : ''}`}
        >
          {m}
        </button>
      ))}
      <button type="button" aria-label="新工作表" className="mt-[5px] ml-[33px]">
        <svg width="16" height="16" viewBox="0 0 16 16" fill="none" stroke="#777"><circle cx="8" cy="8" r="7.500" /><path d="M8 4v8M4 8h8" strokeWidth="2" /></svg>
      </button>
      <div className="mt-1.5 mr-[21px] ml-auto flex h-[15px] w-[747px]">
        <div className="flex w-4 shrink-0 flex-col gap-[3px] pt-0.5">
          {[0, 1, 2].map((i) => <span key={i} className="size-0.5 bg-[#a6a6a6]" />)}
        </div>
        <button type="button" aria-label="向左滚动" className={`${scrollButton} w-[15px]`}><Caret className="rotate-90 text-[#666]" /></button>
        <div className="flex flex-1 bg-[#dadada]"><div className="w-[93.4%] border border-l-0 border-[#ababab] bg-white" /></div>
        <button type="button" aria-label="向右滚动" className={`${scrollButton} ml-0.5 w-[15px]`}><Caret className="-rotate-90 text-[#666]" /></button>
      </div>
    </div>
  );
}

function StatusBar() {
  return (
    <div className="flex h-[23px] shrink-0 items-center border-t border-b border-t-[#c6c6c6] border-b-[#a9bdb3] bg-[#f3f3f3] pr-2 pl-1.5 text-xs text-[#333]">
      <span>就绪</span>
      <span className="mr-4 ml-auto">平均值: 11.0625</span>
      <span className="mr-4">计数: 27</span>
      <span className="mr-[18px]">求和: 265.5</span>
      <button type="button" aria-label="普通" className="flex h-full w-[38px] items-center justify-center bg-[#c6c6c6]">
        <svg width="13" height="13" viewBox="0 0 13 13" fill="none" stroke="#666"><path d="M.5.500h12v12H.5zM4.500 0v13M8.500 0v13M0 4.500h13M0 8.500h13" /></svg>
      </button>
      <button type="button" aria-label="页面布局视图" className="flex h-full w-[38px] items-center justify-center">
        <svg width="14" height="13" viewBox="0 0 14 13" fill="none" stroke="#666"><path d="M.5.500h13v12H.5zM3.500 2.500h7v8h-7zM5 4.500h4M5 6.500h4M5 8.500h4" /></svg>
      </button>
      <button type="button" aria-label="分页预览" className="flex h-full w-[38px] items-center justify-center">
        <svg width="14" height="13" viewBox="0 0 14 13" fill="none" stroke="#666"><path d="M.5.500h13v12H.5zM5.500 0v7.500M9.500 0v7.500M0 7.500h9.500" /></svg>
      </button>
      <button type="button" aria-label="缩小" className="ml-1 w-2.5"><span className="block h-0.5 w-1.5 bg-[#555]" /></button>
      <input
        type="range"
        aria-label="缩放"
        min={0}
        max={100}
        defaultValue={39}
        className="h-4 w-[100px] appearance-none bg-transparent bg-[linear-gradient(#a0a0a0,#a0a0a0)] bg-[length:100%_1px] bg-center bg-no-repeat [&::-webkit-slider-thumb]:h-[11px] [&::-webkit-slider-thumb]:w-[5px] [&::-webkit-slider-thumb]:appearance-none [&::-webkit-slider-thumb]:bg-[#666]"
      />
      <button type="button" aria-label="放大" className="ml-1 w-5"><svg width="8" height="8" stroke="#555" strokeWidth="2"><path d="M0 4h8M4 0v8" /></svg></button>
      <span>80%</span>
    </div>
  );
}

/* ---------- taskbar ---------- */

const TaskButton = ({ label, running = false, children }: { label: string; running?: boolean; children: React.ReactNode }) => (
  <button type="button" aria-label={label} className="flex h-10 w-11 flex-col items-center justify-between pt-1">
    {children}
    <span className={`h-[3px] w-1.5 rounded-full ${running ? 'bg-[#6f8a7f]' : ''}`} />
  </button>
);

function Taskbar() {
  return (
    <footer className="flex h-[47px] shrink-0 items-center bg-[#c9eedf] text-xs text-[#1a1a1a]">
      <div className="flex flex-1 items-center gap-[7px] pb-0.5 pl-[18px]">
        <svg width="25" height="18" viewBox="0 0 25 18">
          <defs><linearGradient id="cloud" x1="0" y1="0" x2="0" y2="1"><stop offset="0" stopColor="#7aa4ee" /><stop offset="1" stopColor="#c5d8fa" /></linearGradient></defs>
          <path d="M6 17a5.500 5.500 0 010-10C7 0 17-1 18 6c8 0 8 11 1 11z" fill="url(#cloud)" />
          <path d="M8 17c-3-6 5-9 8-5 3-3 8 0 6 4z" fill="#d9e6fc" opacity=".6" />
        </svg>
        <div className="leading-4"><div>12°C</div><div className="text-[#555]">阴</div></div>
      </div>

      <div className="flex items-center pl-1.5">
        <button type="button" aria-label="开始" className="mr-[13px]">
          <svg width="24" height="23" viewBox="0 0 24 23">
            <defs><linearGradient id="win" x1="0" y1="0" x2="1" y2="1"><stop offset="0" stopColor="#5ad4fb" /><stop offset="1" stopColor="#0069c5" /></linearGradient></defs>
            <path d="M0 0h11.500v11H0zM12.500 0H24v11H12.500zM0 12h11.500v11H0zM12.500 12H24v11H12.500z" fill="url(#win)" />
          </svg>
        </button>
        <div className="mr-1 flex h-[31px] w-[218px] items-center gap-2.5 rounded-full border border-[#b3d9ca] bg-[#eef9f4] pr-1 pl-2.5">
          <svg width="15" height="16" viewBox="0 0 15 16" fill="none" stroke="#222" strokeWidth="1.800"><circle cx="6.500" cy="6.500" r="5.500" /><path d="M10.500 11l4 4.500" /></svg>
          <input aria-label="搜索" placeholder="搜索" className="w-24 min-w-0 flex-1 bg-transparent text-sm outline-none placeholder:text-[#555]" />
          <svg width="48" height="22" viewBox="0 0 48 22">
            <path d="M1 11c2-3 6-2 9-6C12-1 21-1 20 5c0 4-5 7-9 8-3 2-7 3-8 0z" fill="#f0c088" />
            <path d="M9 4c5 3 7 5 6 9" stroke="#d8526b" strokeWidth="2" fill="none" />
            <path d="M10 13c5-3 6 0 11 6M11 13c0 4 1 5 4 8" stroke="#d8526b" strokeWidth="2.500" strokeDasharray="4 1" fill="none" />
            <path d="M2 12c2 4 5 6 9 8l-1-7z" fill="#e9a86f" />
            <ellipse cx="36" cy="16" rx="11" ry="4.500" fill="#9a7fc6" />
            <path d="M28 2c5-2 11-2 16 0l-2 13c-4 2-8 2-11 0z" fill="#544770" />
            <path d="M30 11c4 2 8 2 13 0l-1 4c-4 2-8 2-11 0z" fill="#a58be0" />
          </svg>
        </div>
        <TaskButton label="任务视图">
          <svg width="24" height="24" viewBox="0 0 24 24"><path d="M1 7h17v16H1z" fill="#222" /><path d="M7 1h16v15H7z" fill="#f5f5f5" /><path d="M7 7h11v9H7z" fill="#bcbcbc" /></svg>
        </TaskButton>
        <TaskButton label="文件资源管理器" running>
          <svg width="24" height="24" viewBox="0 0 24 24"><path d="M0 3a2 2 0 012-2h7l2 4H0z" fill="#d99b1c" /><path d="M0 5h11l2-2h11v18a2 2 0 01-2 2H2a2 2 0 01-2-2z" fill="#fdca45" /><path d="M4 23v-6a2 2 0 012-2h12a2 2 0 012 2v6z" fill="#1682d4" /><path d="M8 18h8v2H8z" fill="#0b559b" /></svg>
        </TaskButton>
        <TaskButton label="Microsoft Edge" running>
          <svg width="24" height="24" viewBox="0 0 24 24"><circle cx="12" cy="12" r="12" fill="#1b7bd0" /><path d="M1 9C5-3 22-3 24 11c0 5-5 7-9 5 2-4-1-8-6-8-4 0-7 1-8 3z" fill="#3cc4c0" /><path d="M13 0c7 0 11 5 11 11 0 4-4 6-8 5 5-5 3-13-3-16z" fill="#69d468" /><path d="M8 11c-3 6 2 12 9 12 3-1 5-3 6-5-7 3-13 0-13-6z" fill="#0c4c9a" /><path d="M11 10c2-1 5 1 4 5 2 1 4 1 6 0-5 3-11 0-10-5z" fill="#d7f2ec" /></svg>
        </TaskButton>
        <TaskButton label="Microsoft Store">
          <svg width="24" height="24" viewBox="0 0 24 24"><path d="M7 6V2a1 1 0 011-1h8a1 1 0 011 1v4" fill="none" stroke="#28b6ec" strokeWidth="2" /><path d="M0 5h24v15a3 3 0 01-3 3H3a3 3 0 01-3-3z" fill="#174b84" /><path d="M7 9h4.500v4.500H7z" fill="#f25022" /><path d="M12.500 9H17v4.500h-4.500z" fill="#7fba00" /><path d="M7 14.500h4.500V19H7z" fill="#00a4ef" /><path d="M12.500 14.500H17V19h-4.500z" fill="#ffb900" /></svg>
        </TaskButton>
        <TaskButton label="计算器" running>
          <svg width="18" height="24" viewBox="0 0 18 24"><rect width="18" height="24" rx="1.500" fill="#5b6670" /><path d="M2 2h14v4H2z" fill="#4fd4f5" /><path d="M2 8h4v4H2zM7 8h4v4H7zM12 8h4v4h-4zM2 13h4v4H2zM7 13h4v4H7zM2 18h4v4H2zM7 18h4v4H7z" fill="#d4dade" /><path d="M12 13h4v9h-4z" fill="#14427d" /></svg>
        </TaskButton>
        <TaskButton label="微信" running>
          <svg width="24" height="24" viewBox="0 0 24 24"><path d="M9 2c12 0 12 14 2 15l-6 2 1-3C-3 12-1 2 9 2z" fill="#15cc63" /><path d="M16 9c9 0 10 9 4 12l1 2-4-1c-9 0-10-12-1-13z" fill="#e8f1ed" /><circle cx="6" cy="7" r="1.200" fill="#0a7a38" /><circle cx="12" cy="7" r="1.200" fill="#0a7a38" /><circle cx="14" cy="14" r="1" fill="#777" /><circle cx="19" cy="14" r="1" fill="#777" /></svg>
        </TaskButton>
        <TaskButton label="Google Chrome" running>
          <svg width="24" height="24" viewBox="0 0 24 24"><circle cx="12" cy="12" r="12" fill="#fbc116" /><path d="M1.600 6A12 12 0 0122.400 6H12a6 6 0 00-5.500 8z" fill="#e33b2e" /><path d="M1.600 6A12 12 0 0012 24l5-9a6 6 0 01-10 0z" fill="#2da94f" /><circle cx="12" cy="12" r="5.500" fill="#fff" /><circle cx="12" cy="12" r="4.200" fill="#3b78e7" /></svg>
        </TaskButton>
        <TaskButton label="财务" running>
          <svg width="24" height="24" viewBox="0 0 24 24"><rect width="24" height="24" rx="2" fill="#2f58ff" /><path d="M7 4l5 6 5-6M12 10v10M7 11.500h10M7 15.500h10" fill="none" stroke="#d5f5ea" strokeWidth="2.200" /></svg>
        </TaskButton>
        <button type="button" aria-label="Excel" className="ml-0.5 flex h-[39px] w-[38px] flex-col items-center justify-between rounded-md border border-[#dcf3ea] bg-[#e4f6ee] pt-1.5">
          <svg width="23" height="23" viewBox="0 0 23 23"><path d="M12.500 3.500h10v16h-10z" fill="#fff" stroke="#217346" /><path d="M13 6.500h9M13 9.500h9M13 12.500h9M13 15.500h9M17.500 4v15" stroke="#217346" /><path d="M0 3l14-3v23L0 20z" fill="#1d6f42" /><path d="M4 8l6 8M10 7.500L4 16" stroke="#fff" strokeWidth="2" /></svg>
          <span className="h-[3px] w-4 rounded-full bg-[#0078d4]" />
        </button>
      </div>

      <div className="flex flex-1 items-center justify-end pr-[18px] pb-0.5">
        <svg width="11" height="7" viewBox="0 0 11 7" fill="none" stroke="#222" strokeWidth="1.500"><path d="M.5 6l5-5 5 5" /></svg>
        <svg width="17" height="18" viewBox="0 0 17 18" fill="none" stroke="#222" strokeWidth="1.400" className="ml-[18px]"><path d="M1 8C1 0 12-1 15 5M15 1v4h-4M1 17v-5h5M1 12l4 4" /><circle cx="12.500" cy="13.500" r="4" fill="#0078d4" stroke="none" /></svg>
        <span className="ml-4 text-[15px]">英</span>
        <span className="ml-[23px] text-[15px]">拼</span>
        <svg width="17" height="18" viewBox="0 0 17 18" fill="none" stroke="#222" strokeWidth="1.300" className="ml-[22px]"><path d="M9 2H1v11h10V8M3 16.500h8M6 13v3M11 1.500h4v5h-4zM13 6.500V16h-2" /></svg>
        <svg width="17" height="14" viewBox="0 0 17 14" fill="none" stroke="#222" strokeWidth="1.200" className="ml-[7px]"><path d="M1 5h2l4-3.500v11L3 9H1zM9 5c1 1 1 3 0 4M11 3c3 2 3 6 0 8M13.500 1c4 4 4 8 0 12" /></svg>
        <div className="ml-3.5 text-right leading-4"><div>13:48</div><div>2025/12/16</div></div>
      </div>
    </footer>
  );
}

function ColumnWidthDialog() {
  const [width, setWidth] = useState('6');
  const [open, setOpen] = useState(true);
  if (!open) return null;
  return (
    <form
      role="dialog"
      aria-label="列宽"
      onSubmit={(e) => e.preventDefault()}
      className="absolute top-[408px] left-[624px] z-20 w-[171px] overflow-hidden rounded-lg border border-[#a8a8a8] bg-[#f0f0f0] text-xs text-black shadow-[0_16px_36px_rgba(0,0,0,0.4)]"
    >
      <div className="flex h-[29px] items-center bg-[#e6f8f1] pb-0.5 pl-2">
        <span className="flex-1">列宽</span>
        <button type="button" aria-label="帮助" className="mr-9 text-sm">?</button>
        <button type="button" aria-label="关闭对话框" onClick={() => setOpen(false)} className="mr-[17px]">
          <svg width="11" height="11" viewBox="0 0 11 11" stroke="#222"><path d="M0 0l11 11M11 0L0 11" /></svg>
        </button>
      </div>
      <div className="flex items-center pt-[9px] pr-[5px] pl-[5px]">
        <label htmlFor="col-width" className="w-[52px] whitespace-nowrap">列宽(<u>C</u>):</label>
        <input id="col-width" value={width} onChange={(e) => setWidth(e.target.value)} className="h-[26px] w-full min-w-0 flex-1 border border-[#ababab] bg-white px-[3px] pb-0.5 outline-none" />
      </div>
      <div className="flex gap-2.5 pt-[15px] pr-1.5 pb-2.5 pl-[5px]">
        <button type="submit" className="h-[29px] flex-1 rounded border border-[#0078d4] bg-[#e0eef9] p-0.5"><span className="flex size-full items-center justify-center border border-dotted border-black">确定</span></button>
        <button type="button" onClick={() => setOpen(false)} className="h-[29px] flex-1 rounded border border-[#d0d0d0] bg-[#fdfdfd]">取消</button>
      </div>
    </form>
  );
}

const App: React.FC = () => {
  return (
    <div className="relative flex h-screen w-full flex-col overflow-hidden bg-[#e6e6e6] font-['Open_Sans','Noto_Sans_CJK_SC',sans-serif]">
      <TitleBar />
      <TabBar />
      <Ribbon />
      <FormulaBar />
      <main className="flex min-h-0 flex-1">
        <Sheet />
        <div className="mr-[3px] ml-[3px] flex w-[15px] flex-col pt-[3px]">
          <button type="button" aria-label="向上滚动" className={`${scrollButton} h-[15px]`}><Caret className="rotate-180 text-[#666]" /></button>
          <div className="min-h-0 flex-1 bg-[#dadada]"><div className="h-[82%] border border-[#ababab] bg-white" /></div>
          <button type="button" aria-label="向下滚动" className={`${scrollButton} h-[15px]`}><Caret /></button>
        </div>
      </main>
      <SheetTabs />
      <StatusBar />
      <Taskbar />
      <ColumnWidthDialog />
    </div>
  );
};

export default App;
